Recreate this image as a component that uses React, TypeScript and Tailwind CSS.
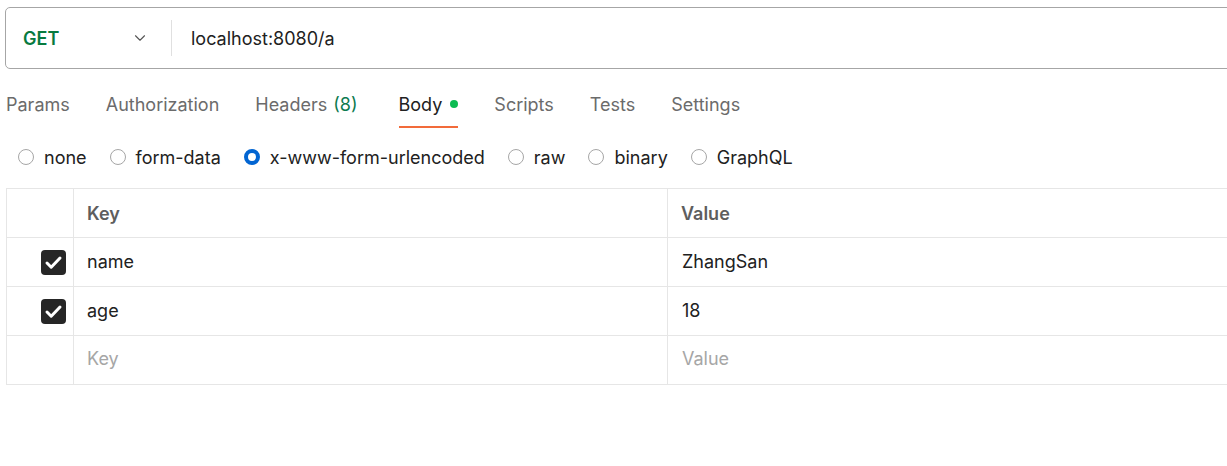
import { ChevronDown } from "lucide-react";

const tabs = ["Params", "Authorization", "Headers", "Body", "Scripts", "Tests", "Settings"];
const bodyTypes = ["none", "form-data", "x-www-form-urlencoded", "raw", "binary", "GraphQL"];
const rows = [
  { key: "name", value: "ZhangSan" },
  { key: "age", value: "18" },
];

function CheckBox() {
  return (
    <span className="flex h-[25px] w-[25px] items-center justify-center rounded-[4px] bg-[#262626]">
      <svg width="25" height="25" viewBox="0 0 25 25" fill="none">
        <path d="M6 13l4.2 4.2L19 8" stroke="#fff" strokeWidth="3" strokeLinecap="round" strokeLinejoin="round" />
      </svg>
    </span>
  );
}

function Radio({ checked }: { checked?: boolean }) {
  return checked ? (
    <span className="h-[16px] w-[16px] rounded-full border-[4px] border-[#0265d2] bg-white" />
  ) : (
    <span className="h-[16px] w-[16px] rounded-full border border-[#a6a6a6] bg-white" />
  );
}

export default function App() {
  return (
    <div className="h-[466px] w-[1227px] overflow-hidden bg-white font-['Inter',sans-serif] text-[18px] text-[#212121]">
      <div className="pl-[5px] pt-[7px]">
        <div className="flex h-[62px] w-[1240px] items-center rounded-[5px] border border-[#a6a6a6]">
          <div className="flex w-[165px] items-center pl-[17px]">
            <span className="w-[108px] font-semibold text-[#077a3f]">GET</span>
            <ChevronDown size={18} strokeWidth={1.5} className="text-[#555]" />
          </div>
          <div className="h-[36px] w-px bg-[#e0e0e0]" />
          <span className="pl-[19px]">localhost:8080/a</span>
        </div>
      </div>

      <div className="mt-[17px] flex h-[42px] items-start gap-[36px] pl-[6px]">
        {tabs.map((t) =>
          t === "Body" ? (
            <div key={t} className="ml-[5px] flex flex-col">
              <div className="flex h-[40px] items-center gap-[8px] pb-[4px] text-[#212121]">
                Body
                <span className="h-[8px] w-[8px] rounded-full bg-[#0cbb52]" />
              </div>
              <div className="h-[2px] bg-[#f26b3a]" />
            </div>
          ) : (
            <div key={t} className="flex h-[40px] items-center pb-[4px] text-[#6b6b6b]">
              {t}
              {t === "Headers" && <span className="ml-[6px] text-[#0d7a4f]">(8)</span>}
            </div>
          )
        )}
      </div>

      <div className="mt-[7px] flex h-[44px] items-center gap-[23px] pl-[18px]">
        {bodyTypes.map((b) => (
          <label key={b} className="flex items-center gap-[10px]">
            <Radio checked={b === "x-www-form-urlencoded"} />
            <span>{b}</span>
          </label>
        ))}
      </div>

      <div className="ml-[6px] mt-[9px] w-[1230px] border-l border-t border-[#e6e6e6]">
        <div className="flex h-[49px] border-b border-[#e6e6e6] font-semibold text-[#5e5e5e]">
          <div className="w-[67px] border-r border-[#e6e6e6]" />
          <div className="flex w-[594px] items-center border-r border-[#e6e6e6] pl-[13px]">Key</div>
          <div className="flex flex-1 items-center pl-[13px]">Value</div>
        </div>
        {rows.map((r) => (
          <div key={r.key} className="flex h-[49px] border-b border-[#e6e6e6]">
            <div className="flex w-[67px] items-center justify-end border-r border-[#e6e6e6] pr-[7px]">
              <CheckBox />
            </div>
            <div className="flex w-[594px] items-center border-r border-[#e6e6e6] pb-[2px] pl-[13px]">{r.key}</div>
            <div className="flex flex-1 items-center pb-[2px] pl-[14px]">{r.value}</div>
          </div>
        ))}
        <div className="flex h-[49px] border-b border-[#e6e6e6] text-[#a6a6a6]">
          <div className="w-[67px] border-r border-[#e6e6e6]" />
          <div className="flex w-[594px] items-center border-r border-[#e6e6e6] pb-[4px] pl-[13px]">Key</div>
          <div className="flex flex-1 items-center pb-[4px] pl-[14px]">Value</div>
        </div>
      </div>
    </div>
  );
}
